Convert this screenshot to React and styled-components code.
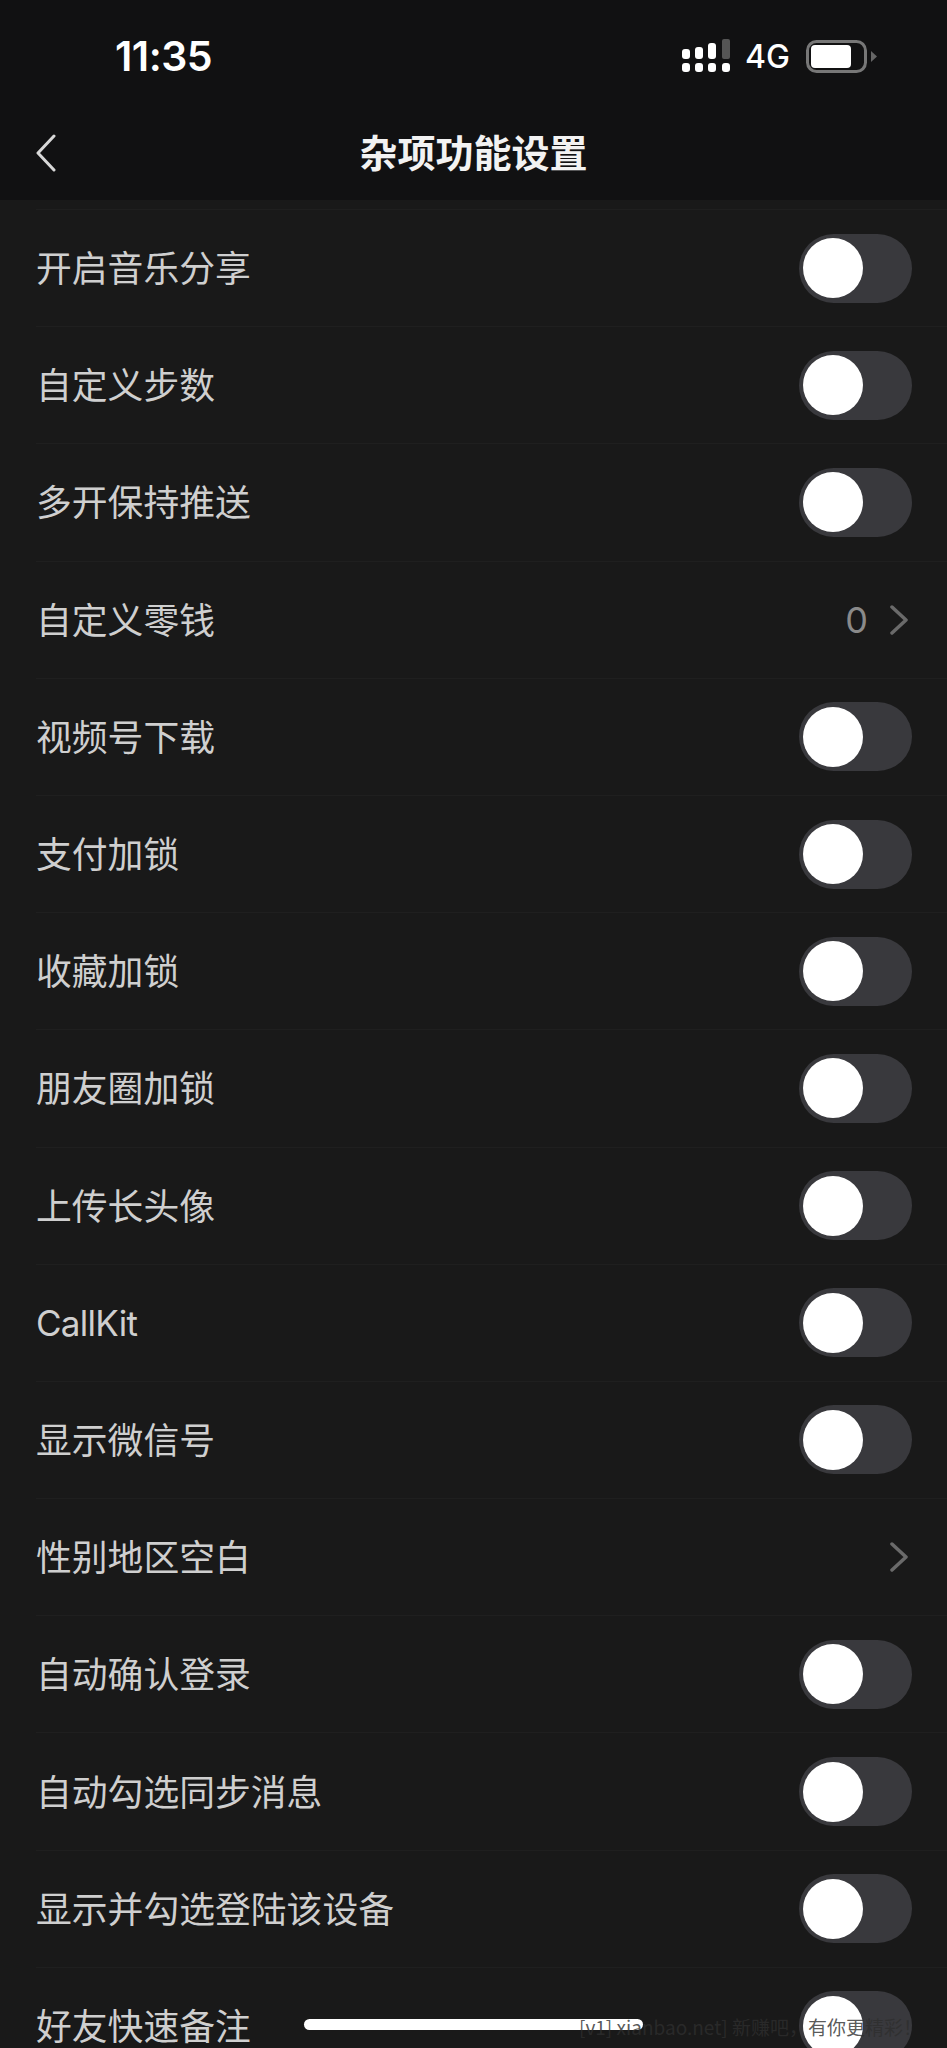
import React from "react";
import styled, { createGlobalStyle } from "styled-components";

const GlobalStyle = createGlobalStyle`
  html, body {
    margin: 0;
    padding: 0;
    background: #191919;
  }
`;

const Screen = styled.div`
  position: relative;
  width: 947px;
  height: 2048px;
  overflow: hidden;
  background: #191919;
  font-family: "Noto Sans CJK SC", "Noto Sans", sans-serif;
`;

const Top = styled.header`
  height: 200px;
  background: #111112;
  display: flex;
  flex-direction: column;
`;

const StatusBar = styled.div`
  height: 112px;
  display: flex;
  align-items: center;
  justify-content: space-between;
  padding: 0 70px 0 115px;
`;

const Time = styled.span`
  font-family: Inter, Roboto, sans-serif;
  font-size: 41px;
  font-weight: 600;
  color: #fff;
  letter-spacing: -0.5px;
`;

const StatusRight = styled.div`
  display: flex;
  align-items: center;
`;

const Net = styled.span`
  font-family: Inter, Roboto, sans-serif;
  font-size: 32px;
  font-weight: 500;
  color: #fff;
  margin: 0 16px 0 15px;
`;

const NavBar = styled.div`
  height: 88px;
  display: flex;
  align-items: center;
  justify-content: center;
  position: relative;
`;

const Back = styled.svg`
  position: absolute;
  left: 36px;
  top: 22px;
`;

const Title = styled.h1`
  margin: 0;
  font-size: 38px;
  font-weight: 700;
  color: #f2f2f2;
  transform: translateY(-6px);
`;

const List = styled.div`
  padding-top: 9px;
  display: flex;
  flex-direction: column;
`;

const Row = styled.div`
  height: 117.2px;
  box-sizing: border-box;
  margin-left: 36px;
  padding-right: 35px;
  border-top: 1px solid #1f1f1f;
  display: flex;
  align-items: center;
  justify-content: space-between;
`;

const Label = styled.span`
  font-family: "Noto Sans CJK SC", sans-serif;
  font-size: 35.8px;
  font-weight: 400;
  color: #cfcfcf;
  padding-bottom: 4px;
`;

const LatinLabel = styled.span`
  font-family: Inter, sans-serif;
  font-size: 35px;
  letter-spacing: -0.7px;
  color: #cfcfcf;
`;

const Switch = styled.div`
  width: 113px;
  height: 69px;
  border-radius: 35px;
  background: #39393d;
  display: flex;
  align-items: center;
  padding-left: 4px;
  box-sizing: border-box;
`;

const Knob = styled.div`
  width: 60px;
  height: 60px;
  border-radius: 50%;
  background: #fff;
`;

const Value = styled.div`
  display: flex;
  align-items: center;
  gap: 22px;
  padding-right: 4px;
`;

const Count = styled.span`
  font-family: Inter, Roboto, sans-serif;
  font-size: 36px;
  font-weight: 400;
  color: #8a8a8a;
`;

const HomeBar = styled.div`
  position: absolute;
  left: 304px;
  top: 2019px;
  width: 339px;
  height: 11px;
  border-radius: 6px;
  background: #fff;
`;

const Watermark = styled.div`
  position: absolute;
  left: 579px;
  top: 2011px;
  font-size: 19px;
  line-height: 32px;
  white-space: nowrap;
  color: rgba(46, 46, 46, 0.8);
`;

const Signal = () => (
  <svg width="48" height="34" viewBox="0 0 48 34" fill="#fff">
    <rect x="0" y="10" width="8" height="10" rx="3" />
    <rect x="13" y="8" width="8" height="12" rx="3" />
    <rect x="26" y="4" width="8" height="16" rx="3" />
    <rect x="40" y="0" width="8" height="20" rx="2" fill="#555" />
    <rect x="0" y="24" width="8" height="9" rx="3" />
    <rect x="13" y="24" width="8" height="9" rx="3" />
    <rect x="26" y="24" width="8" height="9" rx="3" />
    <rect x="40" y="24" width="8" height="9" rx="3" />
  </svg>
);

const Battery = () => (
  <svg width="71" height="33" viewBox="0 0 71 33">
    <rect x="1.5" y="1.5" width="58" height="30" rx="9" fill="none" stroke="#777" strokeWidth="3" />
    <rect x="5" y="5" width="40" height="23" rx="4" fill="#fff" />
    <path d="M65 11l6 5.5-6 5.5z" fill="#666" />
  </svg>
);

const Chevron = () => (
  <svg width="18" height="30" viewBox="0 0 18 30" fill="none">
    <path d="M2 2l14 13L2 28" stroke="#6a6a6a" strokeWidth="3.5" strokeLinecap="round" strokeLinejoin="round" />
  </svg>
);

const rows = [
  { label: "开启音乐分享" },
  { label: "自定义步数" },
  { label: "多开保持推送" },
  { label: "自定义零钱", link: true, value: "0" },
  { label: "视频号下载" },
  { label: "支付加锁" },
  { label: "收藏加锁" },
  { label: "朋友圈加锁" },
  { label: "上传长头像" },
  { label: "CallKit", latin: true },
  { label: "显示微信号" },
  { label: "性别地区空白", link: true },
  { label: "自动确认登录" },
  { label: "自动勾选同步消息" },
  { label: "显示并勾选登陆该设备" },
  { label: "好友快速备注" },
];

export default function App() {
  return (
    <Screen>
      <GlobalStyle />
      <Top>
        <StatusBar>
          <Time>11:35</Time>
          <StatusRight>
            <Signal />
            <Net>4G</Net>
            <Battery />
          </StatusRight>
        </StatusBar>
        <NavBar>
          <Back width="20" height="38" viewBox="0 0 20 38" fill="none">
            <path d="M18 2L2 19l16 17" stroke="#d8d8d8" strokeWidth="3" strokeLinecap="round" strokeLinejoin="round" />
          </Back>
          <Title>杂项功能设置</Title>
        </NavBar>
      </Top>
      <List>
        {rows.map((row) => (
          <Row key={row.label}>
            {row.latin ? <LatinLabel>{row.label}</LatinLabel> : <Label>{row.label}</Label>}
            {row.link ? (
              <Value>
                {row.value && <Count>{row.value}</Count>}
                <Chevron />
              </Value>
            ) : (
              <Switch>
                <Knob />
              </Switch>
            )}
          </Row>
        ))}
      </List>
      <HomeBar />
      <Watermark>[v1] xianbao.net] 新赚吧，有你更精彩！</Watermark>
    </Screen>
  );
}
